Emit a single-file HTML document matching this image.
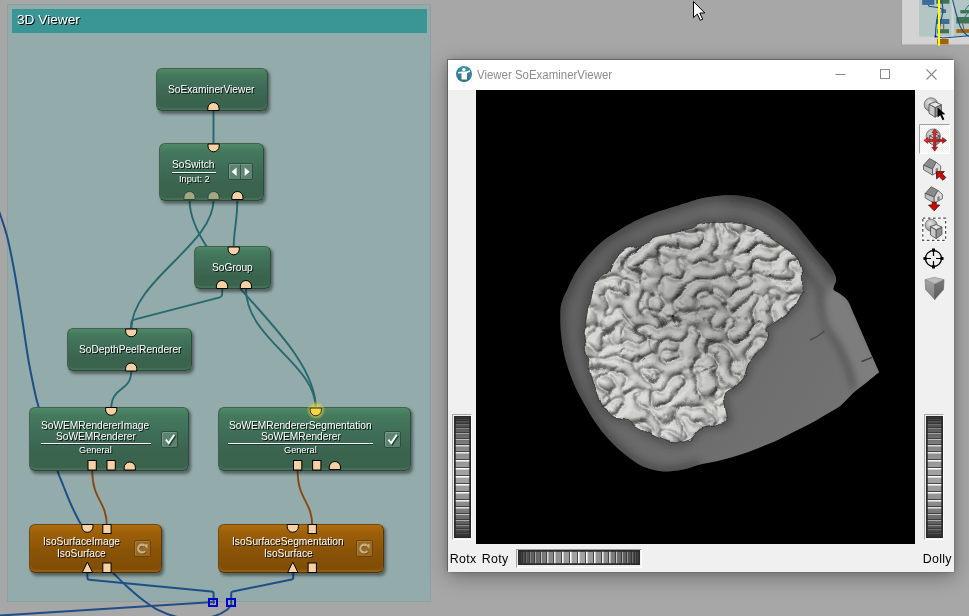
<!DOCTYPE html>
<html><head><meta charset="utf-8"><title>3D Viewer</title>
<style>

html,body{margin:0;padding:0;}
body{width:969px;height:616px;overflow:hidden;position:relative;background:#a7a7a7;font-family:"Liberation Sans",sans-serif;}
.abs{position:absolute;}
#frame{position:absolute;left:7px;top:4px;width:422px;height:596px;background:#93abaa;border:1px solid #8d9f9e;}
#hdr{position:absolute;left:12px;top:9px;width:415px;height:24px;background:#3a9595;color:#fff;font-size:13.7px;line-height:22px;text-shadow:1px 1px 0 #000;}
#hdr span{position:absolute;left:5px;top:0px;white-space:nowrap;will-change:transform;}
svg{position:absolute;left:0;top:0;overflow:visible;}
.node{position:absolute;box-sizing:border-box;border:1px solid;border-color:#455f4f #2f4b3b #2c4838 #455f4f;border-radius:6px;
 background:linear-gradient(#4f8a69 0%,#457a5d 12%,#40705a 35%,#3b644f 70%,#3a624d 100%);
 box-shadow:inset 0 -2px 1.5px rgba(110,175,135,.2),2px 2.5px 3px rgba(0,0,0,.42);color:#fff;font-size:10.2px;text-align:center;white-space:nowrap;
 text-shadow:1px 1px 0 rgba(10,25,18,.9);}
.node.or{border-color:#6b4a14 #55360a #4f3208 #6b4a14;box-shadow:inset 0 -2px 1.5px rgba(220,150,40,.28),2px 2.5px 3px rgba(0,0,0,.42);background:linear-gradient(#b06c0c 0%,#9c5f08 18%,#8a5407 55%,#7e4c06 100%);text-shadow:1px 1px 0 rgba(40,20,0,.9);}
#txt{position:absolute;left:0;top:0;width:0;height:0;z-index:3;color:#fff;font-size:10.2px;text-shadow:1px 1px 0 rgba(0,8,4,.92);}
.t{position:absolute;line-height:12px;height:12px;white-space:nowrap;will-change:transform;}
.s{font-size:9.2px;}
.ul{position:absolute;height:1px;background:#fff;box-shadow:0 1px 0 rgba(10,25,18,.6);}
.btn{position:absolute;box-sizing:border-box;border:1px solid #2f4c3d;border-radius:2px;background:#5b8571;box-shadow:inset 1px 1px 0 rgba(255,255,255,.18);}
.node.or .btn{border-color:#6a4509;background:#9b6a20;box-shadow:inset 1px 1px 0 rgba(255,255,255,.13);}

#win{position:absolute;left:448px;top:60px;width:506px;height:512px;background:#f0f0f0;z-index:5;
 box-shadow:-1px -1px 0 0 rgba(60,60,60,.5),1px 1px 0 0 rgba(60,60,60,.14),0 5px 20px rgba(0,0,0,.32),0 0 7px rgba(0,0,0,.2);}
#tb{position:absolute;left:0;top:0;width:506px;height:30px;background:#fff;}
#ttl{position:absolute;left:28.7px;top:6.5px;font-size:12.3px;line-height:16px;color:#8c8c8c;white-space:nowrap;transform:scaleX(.931);transform-origin:0 0;}
#vp{position:absolute;left:28px;top:30px;width:439px;height:454px;background:#000;overflow:hidden;}
.lbl{position:absolute;font-size:12.4px;line-height:14px;color:#000;white-space:nowrap;letter-spacing:.3px;}
.wheelv{position:absolute;box-sizing:border-box;width:20px;height:126px;border:1px solid;border-color:#a8a8a8 #fff #fff #a8a8a8;background:#f0f0f0;}
.wheelh{position:absolute;box-sizing:border-box;width:126px;height:19px;border:1px solid;border-color:#a0a0a0 #fff #fff #a0a0a0;background:#f0f0f0;}
</style></head>
<body>
<div id="frame"></div>
<div id="hdr"><span>3D Viewer</span></div>
<svg width="969" height="616" style="z-index:1"><path d="M213.5,110 L213.5,145" stroke="#27696e" stroke-width="1.9" fill="none" stroke-linecap="round"/>
<path d="M237.4,199.0 C237.4,223.2 233.7,228.1 233.7,248.0" stroke="#27696e" stroke-width="1.9" fill="none" stroke-linecap="round"/>
<path d="M189.5,199.5 C189.5,266.5 315.9,337.5 315.9,409.0" stroke="#27696e" stroke-width="1.9" fill="none" stroke-linecap="round"/>
<path d="M245.9,288.5 C245.9,339.5 315.9,363.2 315.9,409.0" stroke="#27696e" stroke-width="1.9" fill="none" stroke-linecap="round"/>
<path d="M213.6,199.5 C213.6,245.6 131.2,279.9 131.2,330.0" stroke="#27696e" stroke-width="1.9" fill="none" stroke-linecap="round"/>
<path d="M222.2,288 L222.2,293.5 C222.2,296.6 221,297.2 217,298.2 L137,318.9 C132.5,320.1 131.1,320.8 131.1,324.5 L131.1,330" stroke="#27696e" stroke-width="1.9" fill="none" stroke-linecap="round"/>
<path d="M131.3,370.5 C131.3,393.1 111.2,385.1 111.2,409.0" stroke="#27696e" stroke-width="1.9" fill="none" stroke-linecap="round"/>
<path d="M92.2,470.0 C92.2,500.5 106.8,500.6 106.8,526.0" stroke="#864914" stroke-width="1.9" fill="none" stroke-linecap="round"/>
<path d="M297.6,470.0 C297.6,500.5 312.2,500.6 312.2,526.0" stroke="#864914" stroke-width="1.9" fill="none" stroke-linecap="round"/>
<path d="M-6.0,196.0 C-5.0,199.0 -2.2,207.3 0.0,214.0 C2.2,220.7 4.6,226.5 7.0,236.0 C9.4,245.5 11.9,258.0 14.3,271.0 C16.7,284.0 19.0,299.0 21.4,314.0 C23.8,329.0 26.2,347.3 28.6,361.0 C31.0,374.7 34.0,388.3 35.7,396.0 C37.4,403.7 36.7,399.7 38.6,407.0 C40.5,414.3 43.9,429.4 47.0,440.0 C50.1,450.6 54.6,463.0 57.3,470.5 C60.0,478.0 60.7,479.3 63.0,485.0 C65.3,490.7 68.2,498.3 71.0,504.5 C73.8,510.7 77.3,517.8 79.6,522.0 C81.9,526.2 84.1,528.7 85.0,530.0" stroke="#1d4f86" stroke-width="2" fill="none" stroke-linecap="round"/>
<path d="M87.4,572 L87.4,578 Q87.4,579.6 89.4,579.8 L211.4,591.5 Q213.6,591.8 213.6,593.6 L213.6,603" stroke="#1d4f86" stroke-width="2" fill="none" stroke-linecap="round"/>
<path d="M293.2,572 L293.2,578 Q293.2,579.3 291.6,579.6 L232.8,591.4 Q231.2,591.8 231.2,593.6 L231.2,603" stroke="#1d4f86" stroke-width="2" fill="none" stroke-linecap="round"/>
<path d="M103.0,563.0 C103.8,563.8 105.8,566.3 107.5,568.0 C109.2,569.7 110.2,570.2 113.2,573.0 C116.2,575.8 120.5,580.5 125.4,585.0 C130.3,589.5 137.3,595.7 142.6,599.8 C147.9,603.9 151.6,606.7 157.3,609.6 C163.0,612.5 170.6,615.3 177.0,617.0 C183.4,618.7 189.7,620.2 196.0,620.0 C202.3,619.8 209.6,617.7 214.8,616.0 C220.0,614.3 224.2,611.7 227.0,609.7 C229.8,607.7 230.8,605.0 231.5,604.0" stroke="#1d4f86" stroke-width="2" fill="none" stroke-linecap="round"/>
<path d="M-2,615.6 L214,602.1" stroke="#1d4f86" stroke-width="2" fill="none" stroke-linecap="round"/></svg>
<div class="node " style="left:155.7px;top:68.0px;width:112.2px;height:42.8px;z-index:2"></div>
<div class="node " style="left:159.2px;top:143.2px;width:105.2px;height:57.4px;z-index:2"><div class="ul" style="left:11.8px;top:27.8px;width:44px"></div><div class="btn" style="left:68.3px;top:19.3px;width:24.5px;height:16.5px"></div></div>
<div class="node " style="left:193.6px;top:246.1px;width:77.8px;height:42.9px;z-index:2"></div>
<div class="node " style="left:66.7px;top:328.3px;width:125.2px;height:43.2px;z-index:2"></div>
<div class="node " style="left:29.1px;top:407.0px;width:160.0px;height:63.6px;z-index:2"><div class="ul" style="left:10.9px;top:35.0px;width:110px"></div><div class="btn" style="left:131.4px;top:22.5px;width:17px;height:17px"></div></div>
<div class="node " style="left:217.7px;top:407.0px;width:193.5px;height:63.6px;z-index:2"><div class="ul" style="left:9.0px;top:35.0px;width:145.5px"></div><div class="btn" style="left:165.3px;top:22.5px;width:17px;height:17px"></div></div>
<div class="node or" style="left:29.2px;top:523.8px;width:132.7px;height:49.2px;z-index:2"><div class="btn" style="left:104.1px;top:15.7px;width:16.5px;height:16.5px"></div></div>
<div class="node or" style="left:217.7px;top:523.8px;width:166.2px;height:49.2px;z-index:2"><div class="btn" style="left:137.8px;top:15.7px;width:16.5px;height:16.5px"></div></div>
<div id="txt"><span class="t" style="left:168px;top:84px">SoExaminerViewer</span><span class="t" style="left:172px;top:159px">SoSwitch</span><span class="t s" style="left:179px;top:173px">Input: 2</span><span class="t" style="left:212px;top:262px">SoGroup</span><span class="t" style="left:79px;top:344px">SoDepthPeelRenderer</span><span class="t" style="left:41px;top:420px">SoWEMRendererImage</span><span class="t" style="left:56px;top:431px">SoWEMRenderer</span><span class="t s" style="left:79px;top:444px">General</span><span class="t" style="left:229px;top:420px">SoWEMRendererSegmentation</span><span class="t" style="left:261px;top:431px">SoWEMRenderer</span><span class="t s" style="left:284px;top:444px">General</span><span class="t" style="left:43px;top:536px">IsoSurfaceImage</span><span class="t" style="left:57px;top:548px">IsoSurface</span><span class="t" style="left:232px;top:536px">IsoSurfaceSegmentation</span><span class="t" style="left:264px;top:548px">IsoSurface</span></div>
<svg width="969" height="616" style="z-index:3"><defs><radialGradient id="glow"><stop offset="0" stop-color="#f4e04a" stop-opacity=".95"/><stop offset=".62" stop-color="#dcd64e" stop-opacity=".62"/><stop offset="1" stop-color="#c8c850" stop-opacity="0"/></radialGradient></defs><path d="M207.8,110.5 L207.8,108.1 A5.6,5.6 0 0 1 219.0,108.1 L219.0,110.5 Z" fill="#f6d1a3" stroke="#000" stroke-width="1" opacity="1"/>
<path d="M208.0,144.0 L208.0,146.2 A5.6,5.6 0 0 0 219.2,146.2 L219.2,144.0 Z" fill="#f6d1a3" stroke="#000" stroke-width="1"/>
<path d="M183.9,199.5 L183.9,197.1 A5.6,5.6 0 0 1 195.1,197.1 L195.1,199.5 Z" fill="#a2a783" stroke="#2f4a3a" stroke-width="1" opacity="1"/>
<path d="M208.0,199.5 L208.0,197.1 A5.6,5.6 0 0 1 219.2,197.1 L219.2,199.5 Z" fill="#a2a783" stroke="#2f4a3a" stroke-width="1" opacity="1"/>
<path d="M231.8,199.5 L231.8,197.1 A5.6,5.6 0 0 1 243.0,197.1 L243.0,199.5 Z" fill="#f6d1a3" stroke="#000" stroke-width="1" opacity="1"/>
<path d="M228.1,247.0 L228.1,249.2 A5.6,5.6 0 0 0 239.3,249.2 L239.3,247.0 Z" fill="#f6d1a3" stroke="#000" stroke-width="1"/>
<path d="M216.4,288.5 L216.4,286.1 A5.6,5.6 0 0 1 227.6,286.1 L227.6,288.5 Z" fill="#f6d1a3" stroke="#000" stroke-width="1" opacity="1"/>
<path d="M240.3,288.5 L240.3,286.1 A5.6,5.6 0 0 1 251.5,286.1 L251.5,288.5 Z" fill="#f6d1a3" stroke="#000" stroke-width="1" opacity="1"/>
<path d="M125.6,329.0 L125.6,331.2 A5.6,5.6 0 0 0 136.8,331.2 L136.8,329.0 Z" fill="#f6d1a3" stroke="#000" stroke-width="1"/>
<path d="M125.6,371.0 L125.6,368.6 A5.6,5.6 0 0 1 136.8,368.6 L136.8,371.0 Z" fill="#f6d1a3" stroke="#000" stroke-width="1" opacity="1"/>
<path d="M105.6,407.5 L105.6,409.7 A5.6,5.6 0 0 0 116.8,409.7 L116.8,407.5 Z" fill="#f6d1a3" stroke="#000" stroke-width="1"/>
<rect x="88.0" y="460.5" width="8.3" height="9.5" fill="#f6d1a3" stroke="#000" stroke-width="1"/>
<rect x="107.0" y="460.5" width="8.3" height="9.5" fill="#f6d1a3" stroke="#000" stroke-width="1"/>
<path d="M124.2,470.0 L124.2,467.6 A5.6,5.6 0 0 1 135.4,467.6 L135.4,470.0 Z" fill="#f6d1a3" stroke="#000" stroke-width="1" opacity="1"/>
<rect x="293.5" y="460.5" width="8.3" height="9.5" fill="#f6d1a3" stroke="#000" stroke-width="1"/>
<rect x="312.6" y="460.5" width="8.3" height="9.5" fill="#f6d1a3" stroke="#000" stroke-width="1"/>
<path d="M329.3,469.5 L329.3,467.1 A5.6,5.6 0 0 1 340.5,467.1 L340.5,469.5 Z" fill="#f6d1a3" stroke="#000" stroke-width="1" opacity="1"/>
<circle cx="316" cy="410.3" r="9.6" fill="url(#glow)"/>
<path d="M310.2,408.0 L310.2,410.2 A5.6,5.6 0 0 0 321.4,410.2 L321.4,408.0 Z" fill="#f7d548" stroke="#3a3000" stroke-width="1"/>
<path d="M81.8,524.5 L81.8,526.7 A5.6,5.6 0 0 0 93.0,526.7 L93.0,524.5 Z" fill="#f6d1a3" stroke="#000" stroke-width="1"/>
<rect x="102.8" y="524.5" width="8.3" height="9.0" fill="#f6d1a3" stroke="#000" stroke-width="1"/>
<path d="M82.2,572.5 L87.4,562.0 L92.6,572.5 Z" fill="#f6d1a3" stroke="#000" stroke-width="1" stroke-linejoin="miter"/>
<rect x="102.8" y="563.0" width="8.3" height="9.5" fill="#f6d1a3" stroke="#000" stroke-width="1"/>
<path d="M287.2,524.5 L287.2,526.7 A5.6,5.6 0 0 0 298.4,526.7 L298.4,524.5 Z" fill="#f6d1a3" stroke="#000" stroke-width="1"/>
<rect x="308.1" y="524.5" width="8.3" height="9.0" fill="#f6d1a3" stroke="#000" stroke-width="1"/>
<path d="M287.6,572.5 L292.8,562.0 L298.0,572.5 Z" fill="#f6d1a3" stroke="#000" stroke-width="1" stroke-linejoin="miter"/>
<rect x="308.1" y="563.0" width="8.3" height="9.5" fill="#f6d1a3" stroke="#000" stroke-width="1"/>
<rect x="209" y="599" width="8" height="7" fill="none" stroke="#0000cc" stroke-width="2"/>
<rect x="227" y="599" width="8" height="7" fill="none" stroke="#0000cc" stroke-width="2"/>
<path d="M240.7,164.5 L240.7,179" stroke="#2f4c3d" stroke-width="1"/>
<path d="M241.7,164.8 L241.7,178.6" stroke="rgba(255,255,255,.18)" stroke-width="1"/>
<path d="M231.6,171.8 L236.6,167.6 L236.6,176 Z" fill="#fff"/>
<path d="M249.6,171.8 L244.6,167.6 L244.6,176 Z" fill="#fff"/>
<path d="M165.7,439.5 L168.7,443.3 L174.5,434.5" stroke="rgba(20,40,30,.7)" stroke-width="2.4" fill="none" transform="translate(1,1)"/>
<path d="M165.9,439.6 L168.7,443.1 L174.3,434.8" stroke="#fff" stroke-width="1.9" fill="none"/>
<path d="M388.2,439.5 L391.2,443.3 L397.0,434.5" stroke="rgba(20,40,30,.7)" stroke-width="2.4" fill="none" transform="translate(1,1)"/>
<path d="M388.4,439.6 L391.2,443.1 L396.8,434.8" stroke="#fff" stroke-width="1.9" fill="none"/>
<path d="M145.1,551.1 A3.9,3.9 0 1 1 144.6,545.6" stroke="#3a2404" stroke-width="2" fill="none" opacity=".5" transform="translate(.6,.7)"/>
<path d="M145.1,551.1 A3.9,3.9 0 1 1 144.6,545.6" stroke="#c6b28e" stroke-width="2.2" fill="none"/>
<path d="M143.7,545.2 L147.5,543.8 L147.3,548.8 Z" fill="#c6b28e"/>
<path d="M367.3,551.1 A3.9,3.9 0 1 1 366.8,545.6" stroke="#3a2404" stroke-width="2" fill="none" opacity=".5" transform="translate(.6,.7)"/>
<path d="M367.3,551.1 A3.9,3.9 0 1 1 366.8,545.6" stroke="#c6b28e" stroke-width="2.2" fill="none"/>
<path d="M365.9,545.2 L369.7,543.8 L369.5,548.8 Z" fill="#c6b28e"/></svg>
<div id="win"><div id="tb"></div>
<svg width="18" height="18" style="left:7px;top:5px" viewBox="0 0 18 18"><defs><linearGradient id="ig" x1="0" y1="0" x2="0" y2="1"><stop offset="0" stop-color="#3f93ad"/><stop offset="1" stop-color="#2b6f8d"/></linearGradient></defs><circle cx="9" cy="9" r="8" fill="url(#ig)"/><circle cx="8.9" cy="4.6" r="1.7" fill="#fff"/><path d="M3,7.2 L6.5,6.6 L11.3,6.6 L14.9,5.2 L15.2,6.5 L12,8.2 L12,14.6 L6.5,14.6 L6.5,8.2 L3.1,8.4 Z" fill="#fff"/></svg>
<div id="ttl">Viewer SoExaminerViewer</div>
<svg width="506" height="30" style="left:0;top:0"><path d="M387.5,14.5 L397.5,14.5" stroke="#8a8a8a" stroke-width="1"/><rect x="432.5" y="9.5" width="9" height="9" fill="none" stroke="#8a8a8a" stroke-width="1"/><path d="M478.5,9.5 L488.5,19.5 M488.5,9.5 L478.5,19.5" stroke="#8a8a8a" stroke-width="1.1"/></svg>
<div id="vp"><svg width="439" height="454" viewBox="0 0 439 454">
<defs>
<linearGradient id="hg" x1="90" y1="150" x2="390" y2="330" gradientUnits="userSpaceOnUse">
 <stop offset="0" stop-color="#5e5e5e"/><stop offset=".35" stop-color="#686868"/><stop offset="1" stop-color="#747474"/>
</linearGradient>
<linearGradient id="bsh" x1="120" y1="330" x2="300" y2="170" gradientUnits="userSpaceOnUse">
 <stop offset="0" stop-color="#fff" stop-opacity=".1"/><stop offset=".45" stop-color="#fff" stop-opacity=".02"/><stop offset=".6" stop-color="#000" stop-opacity=".05"/><stop offset="1" stop-color="#000" stop-opacity=".02"/>
</linearGradient>
<radialGradient id="bcd" cx="218" cy="222" r="85" gradientUnits="userSpaceOnUse"><stop offset="0" stop-color="#000" stop-opacity=".16"/><stop offset=".6" stop-color="#000" stop-opacity=".08"/><stop offset="1" stop-color="#000" stop-opacity="0"/></radialGradient>
<clipPath id="hc"><path d="M403.2,282.3 C401.0,284.0 394.5,289.2 390.2,292.7 C385.9,296.2 381.5,299.2 377.2,303.1 C372.9,307.0 369.0,312.3 364.3,316.0 C359.5,319.7 353.9,322.1 348.7,325.2 C343.5,328.2 338.3,331.5 333.1,334.3 C327.9,337.1 322.7,339.4 317.5,342.0 C312.3,344.6 307.1,347.5 301.9,349.9 C296.7,352.3 292.3,354.0 286.3,356.4 C280.2,358.8 272.5,361.9 265.6,364.2 C258.7,366.5 251.7,368.6 244.8,370.3 C237.9,372.0 230.2,373.0 224.0,374.5 C217.8,376.0 213.4,378.4 207.4,379.5 C201.4,380.6 194.5,381.8 188.1,381.4 C181.7,381.0 174.3,379.3 168.8,377.2 C163.3,375.1 160.0,372.7 155.0,369.0 C150.0,365.3 144.0,360.7 138.5,355.2 C133.0,349.7 127.0,342.8 121.9,335.9 C116.8,329.0 112.2,321.2 108.1,313.8 C104.0,306.4 100.3,299.5 97.1,291.7 C93.9,283.9 90.8,275.2 88.8,266.9 C86.8,258.6 85.6,249.8 84.9,242.0 C84.2,234.2 84.2,225.3 84.5,220.0 C84.8,214.7 85.5,213.4 86.6,210.0 C87.7,206.6 89.0,204.3 91.3,199.5 C93.6,194.7 96.9,186.9 100.4,181.3 C103.8,175.7 107.7,170.7 112.0,165.7 C116.3,160.7 121.3,155.5 126.3,151.4 C131.3,147.3 136.3,144.5 141.9,141.0 C147.5,137.5 154.0,133.6 160.1,130.6 C166.2,127.6 171.8,125.3 178.3,122.9 C184.8,120.5 192.1,118.6 199.0,116.4 C205.9,114.2 214.6,111.4 219.8,109.9 C225.0,108.4 226.5,108.2 230.0,107.6 C233.5,106.9 236.9,106.4 240.6,106.0 C244.3,105.6 247.8,105.2 252.0,105.2 C256.2,105.2 260.3,105.2 265.6,106.0 C270.9,106.8 277.7,107.7 283.7,109.9 C289.8,112.1 296.3,115.3 301.9,119.0 C307.5,122.7 312.7,127.2 317.5,132.0 C322.3,136.8 326.6,142.8 330.5,147.5 C334.4,152.2 337.4,156.4 340.9,160.5 C344.4,164.6 348.5,168.7 351.3,172.2 C354.1,175.7 356.0,178.5 357.5,181.5 C359.0,184.5 360.2,187.1 360.2,190.0 C360.2,192.9 356.8,196.9 357.4,199.2 C357.9,201.4 361.1,201.6 363.5,203.5 C365.9,205.4 369.2,207.3 371.5,210.5 C373.8,213.7 375.0,217.8 377.2,222.9 C379.5,227.9 382.4,234.8 385.0,240.8 C387.6,246.8 389.8,252.1 392.8,259.0 C395.8,265.9 401.5,278.4 403.2,282.3Z"/></clipPath>
<clipPath id="bc"><path d="M224.0,133.2 C229.0,132.1 233.5,133.4 239.6,133.2 C245.7,133.0 254.3,131.3 260.4,132.0 C266.4,132.7 270.7,134.9 275.9,137.1 C281.1,139.2 286.3,141.9 291.5,144.9 C296.7,147.9 302.3,151.8 307.1,155.3 C311.9,158.8 317.1,161.8 320.1,165.7 C323.1,169.6 324.2,173.9 325.3,178.7 C326.4,183.5 326.8,189.5 326.6,194.3 C326.4,199.1 325.9,203.0 324.0,207.3 C322.1,211.6 318.6,216.2 314.9,220.0 C311.2,223.8 306.0,227.4 301.9,230.4 C297.8,233.4 291.9,235.6 290.2,238.2 C288.5,240.8 292.2,242.5 291.5,246.0 C290.8,249.5 289.3,254.7 286.3,259.0 C283.3,263.3 276.4,267.2 273.4,272.0 C270.4,276.8 270.8,283.2 268.2,287.5 C265.6,291.8 261.0,295.3 257.8,297.9 C254.5,300.5 250.2,300.5 248.7,303.1 C247.2,305.8 248.3,309.0 248.8,313.8 C249.3,318.6 253.0,328.2 251.6,331.7 C250.2,335.1 245.2,333.4 240.6,334.5 C236.0,335.6 228.6,336.1 224.0,338.6 C219.4,341.1 218.0,347.4 213.0,349.7 C208.0,352.0 200.2,353.3 193.7,352.4 C187.3,351.5 179.8,346.9 174.3,344.1 C168.8,341.4 164.3,338.2 160.6,335.9 C156.9,333.6 156.4,332.1 152.3,330.3 C148.1,328.5 140.5,328.0 135.7,324.8 C130.9,321.6 126.5,317.0 123.3,311.0 C120.1,305.0 118.5,296.4 116.4,289.0 C114.3,281.6 112.3,274.3 110.9,266.9 C109.5,259.5 108.2,251.3 108.1,244.8 C108.0,238.3 109.9,232.5 110.5,228.0 C111.1,223.5 111.1,222.0 112.0,217.7 C112.9,213.4 114.2,206.8 115.9,202.0 C117.6,197.2 119.6,192.4 122.4,189.0 C125.2,185.6 130.0,184.8 132.8,181.3 C135.6,177.9 136.0,172.2 139.3,168.3 C142.5,164.4 147.5,160.1 152.3,157.9 C157.1,155.7 163.6,157.0 167.9,155.3 C172.2,153.6 174.0,149.4 178.3,147.5 C182.6,145.6 188.7,144.9 193.9,143.6 C199.1,142.3 204.5,141.4 209.5,139.7 C214.5,138.0 219.0,134.3 224.0,133.2Z"/></clipPath>
<filter id="dsp" x="-5%" y="-5%" width="110%" height="110%"><feTurbulence type="fractalNoise" baseFrequency="0.09" numOctaves="1" seed="3" result="n"/><feDisplacementMap in="SourceGraphic" in2="n" scale="7" xChannelSelector="R" yChannelSelector="G"/></filter>
<filter id="bl8" x="-20%" y="-20%" width="140%" height="140%"><feGaussianBlur stdDeviation="8"/></filter>
<filter id="bl4" x="-10%" y="-10%" width="120%" height="120%"><feGaussianBlur stdDeviation="4.5"/></filter>
<filter id="bl6" x="-10%" y="-10%" width="120%" height="120%"><feGaussianBlur stdDeviation="6"/></filter>
<filter id="bl3" x="-20%" y="-20%" width="140%" height="140%"><feGaussianBlur stdDeviation="3"/></filter>
<filter id="bf" x="0" y="0" width="100%" height="100%" color-interpolation-filters="sRGB">
 <feTurbulence type="turbulence" baseFrequency="0.054 0.063" numOctaves="1" seed="11" result="t"/>
 <feColorMatrix in="t" type="matrix" values="0 0 0 0 0  0 0 0 0 0  0 0 0 0 0  2.4 0 0 0 0" result="a"/>
 <feComponentTransfer in="a" result="g"><feFuncA type="gamma" amplitude="1" exponent="0.5" offset="0"/></feComponentTransfer>
 <feGaussianBlur in="g" stdDeviation="1.25" result="ab"/>
 <feDiffuseLighting in="ab" surfaceScale="3.4" diffuseConstant="1.0" lighting-color="#dcdcd8" result="l"><feDistantLight azimuth="225" elevation="66"/></feDiffuseLighting>
 <feComponentTransfer in="ab" result="gr"><feFuncA type="table" tableValues="0.65 0.5 0.22 0.05 0 0 0 0 0 0 0 0 0 0 0 0"/></feComponentTransfer>
 <feGaussianBlur in="gr" stdDeviation="0.4" result="grb"/>
 <feComposite in="grb" in2="l" operator="over"/>
</filter>
</defs>
<path d="M403.2,282.3 C401.0,284.0 394.5,289.2 390.2,292.7 C385.9,296.2 381.5,299.2 377.2,303.1 C372.9,307.0 369.0,312.3 364.3,316.0 C359.5,319.7 353.9,322.1 348.7,325.2 C343.5,328.2 338.3,331.5 333.1,334.3 C327.9,337.1 322.7,339.4 317.5,342.0 C312.3,344.6 307.1,347.5 301.9,349.9 C296.7,352.3 292.3,354.0 286.3,356.4 C280.2,358.8 272.5,361.9 265.6,364.2 C258.7,366.5 251.7,368.6 244.8,370.3 C237.9,372.0 230.2,373.0 224.0,374.5 C217.8,376.0 213.4,378.4 207.4,379.5 C201.4,380.6 194.5,381.8 188.1,381.4 C181.7,381.0 174.3,379.3 168.8,377.2 C163.3,375.1 160.0,372.7 155.0,369.0 C150.0,365.3 144.0,360.7 138.5,355.2 C133.0,349.7 127.0,342.8 121.9,335.9 C116.8,329.0 112.2,321.2 108.1,313.8 C104.0,306.4 100.3,299.5 97.1,291.7 C93.9,283.9 90.8,275.2 88.8,266.9 C86.8,258.6 85.6,249.8 84.9,242.0 C84.2,234.2 84.2,225.3 84.5,220.0 C84.8,214.7 85.5,213.4 86.6,210.0 C87.7,206.6 89.0,204.3 91.3,199.5 C93.6,194.7 96.9,186.9 100.4,181.3 C103.8,175.7 107.7,170.7 112.0,165.7 C116.3,160.7 121.3,155.5 126.3,151.4 C131.3,147.3 136.3,144.5 141.9,141.0 C147.5,137.5 154.0,133.6 160.1,130.6 C166.2,127.6 171.8,125.3 178.3,122.9 C184.8,120.5 192.1,118.6 199.0,116.4 C205.9,114.2 214.6,111.4 219.8,109.9 C225.0,108.4 226.5,108.2 230.0,107.6 C233.5,106.9 236.9,106.4 240.6,106.0 C244.3,105.6 247.8,105.2 252.0,105.2 C256.2,105.2 260.3,105.2 265.6,106.0 C270.9,106.8 277.7,107.7 283.7,109.9 C289.8,112.1 296.3,115.3 301.9,119.0 C307.5,122.7 312.7,127.2 317.5,132.0 C322.3,136.8 326.6,142.8 330.5,147.5 C334.4,152.2 337.4,156.4 340.9,160.5 C344.4,164.6 348.5,168.7 351.3,172.2 C354.1,175.7 356.0,178.5 357.5,181.5 C359.0,184.5 360.2,187.1 360.2,190.0 C360.2,192.9 356.8,196.9 357.4,199.2 C357.9,201.4 361.1,201.6 363.5,203.5 C365.9,205.4 369.2,207.3 371.5,210.5 C373.8,213.7 375.0,217.8 377.2,222.9 C379.5,227.9 382.4,234.8 385.0,240.8 C387.6,246.8 389.8,252.1 392.8,259.0 C395.8,265.9 401.5,278.4 403.2,282.3Z" fill="url(#hg)"/>
<g clip-path="url(#hc)">
 <path d="M224.0,374.5 C221.2,375.3 213.4,378.4 207.4,379.5 C201.4,380.6 194.5,381.8 188.1,381.4 C181.7,381.0 174.3,379.3 168.8,377.2 C163.3,375.1 160.0,372.7 155.0,369.0 C150.0,365.3 144.0,360.7 138.5,355.2 C133.0,349.7 127.0,342.8 121.9,335.9 C116.8,329.0 112.2,321.2 108.1,313.8 C104.0,306.4 100.3,299.5 97.1,291.7 C93.9,283.9 90.8,275.2 88.8,266.9 C86.8,258.6 85.6,249.8 84.9,242.0 C84.2,234.2 84.2,225.3 84.5,220.0 C84.8,214.7 85.5,213.4 86.6,210.0 C87.7,206.6 89.0,204.3 91.3,199.5 C93.6,194.7 96.9,186.9 100.4,181.3 C103.8,175.7 107.7,170.7 112.0,165.7 C116.3,160.7 121.3,155.5 126.3,151.4 C131.3,147.3 136.3,144.5 141.9,141.0 C147.5,137.5 154.0,133.6 160.1,130.6 C166.2,127.6 171.8,125.3 178.3,122.9 C184.8,120.5 192.1,118.6 199.0,116.4 C205.9,114.2 212.9,111.6 219.8,109.9 C226.7,108.2 233.0,106.7 240.6,106.0 C248.2,105.3 258.4,105.3 265.6,106.0 C272.8,106.7 277.7,107.7 283.7,109.9 C289.8,112.1 296.3,115.3 301.9,119.0 C307.5,122.7 312.7,127.2 317.5,132.0 C322.3,136.8 326.6,142.8 330.5,147.5 C334.4,152.2 337.4,156.4 340.9,160.5 C344.4,164.6 348.3,168.3 351.3,172.2 C354.3,176.1 357.7,181.9 359.0,183.9" fill="none" stroke="#1c1c1c" stroke-width="9" opacity=".44" filter="url(#bl4)"/>
 <path d="M252.0,102.0 C254.8,102.2 263.3,102.2 269.0,103.0 C274.7,103.8 280.0,104.8 286.0,107.0 C292.0,109.2 299.2,112.3 305.0,116.0 C310.8,119.7 316.2,124.2 321.0,129.0 C325.8,133.8 330.0,140.2 334.0,145.0 C338.0,149.8 341.5,153.8 345.0,158.0 C348.5,162.2 352.0,166.0 355.0,170.0 C358.0,174.0 361.2,178.0 363.0,182.0 C364.8,186.0 365.5,192.0 366.0,194.0" fill="none" stroke="#1e1e1e" stroke-width="26" opacity=".34" filter="url(#bl8)"/>
 <path d="M347.0,215.0 C347.4,209.5 350.2,207.2 352.0,204.0 C353.8,200.8 354.7,194.8 358.0,196.0 C361.3,197.2 367.5,203.5 372.0,211.0 C376.5,218.5 379.7,229.1 385.0,241.0 C390.3,252.9 402.8,274.0 403.6,282.7 C404.4,291.4 393.9,290.4 390.0,293.0 C386.1,295.6 382.6,300.9 380.0,298.0 C377.4,295.1 377.4,283.2 374.7,275.8 C372.0,268.4 367.8,260.1 363.6,253.7 C359.4,247.3 352.6,243.6 349.8,237.2 C347.0,230.8 346.6,220.5 347.0,215.0Z" fill="#828282" opacity=".75" filter="url(#bl3)"/>
 <path d="M322,176 Q336,186 343,200 Q346,222 350,237 Q362,252 371,274 Q376,288 378,298" fill="none" stroke="#343434" stroke-width="7" opacity=".36" filter="url(#bl3)"/>
 <path d="M334,250 Q342,247 348.500,241" fill="none" stroke="#454545" stroke-width="1.6" opacity=".8"/>
 <path d="M385.500,271.500 L396,267.500" fill="none" stroke="#3f3f3f" stroke-width="1.4"/>
 <path d="M224.0,133.2 C229.0,132.1 233.5,133.4 239.6,133.2 C245.7,133.0 254.3,131.3 260.4,132.0 C266.4,132.7 270.7,134.9 275.9,137.1 C281.1,139.2 286.3,141.9 291.5,144.9 C296.7,147.9 302.3,151.8 307.1,155.3 C311.9,158.8 317.1,161.8 320.1,165.7 C323.1,169.6 324.2,173.9 325.3,178.7 C326.4,183.5 326.8,189.5 326.6,194.3 C326.4,199.1 325.9,203.0 324.0,207.3 C322.1,211.6 318.6,216.2 314.9,220.0 C311.2,223.8 306.0,227.4 301.9,230.4 C297.8,233.4 291.9,235.6 290.2,238.2 C288.5,240.8 292.2,242.5 291.5,246.0 C290.8,249.5 289.3,254.7 286.3,259.0 C283.3,263.3 276.4,267.2 273.4,272.0 C270.4,276.8 270.8,283.2 268.2,287.5 C265.6,291.8 261.0,295.3 257.8,297.9 C254.5,300.5 250.2,300.5 248.7,303.1 C247.2,305.8 248.3,309.0 248.8,313.8 C249.3,318.6 253.0,328.2 251.6,331.7 C250.2,335.1 245.2,333.4 240.6,334.5 C236.0,335.6 228.6,336.1 224.0,338.6 C219.4,341.1 218.0,347.4 213.0,349.7 C208.0,352.0 200.2,353.3 193.7,352.4 C187.3,351.5 179.8,346.9 174.3,344.1 C168.8,341.4 164.3,338.2 160.6,335.9 C156.9,333.6 156.4,332.1 152.3,330.3 C148.1,328.5 140.5,328.0 135.7,324.8 C130.9,321.6 126.5,317.0 123.3,311.0 C120.1,305.0 118.5,296.4 116.4,289.0 C114.3,281.6 112.3,274.3 110.9,266.9 C109.5,259.5 108.2,251.3 108.1,244.8 C108.0,238.3 109.9,232.5 110.5,228.0 C111.1,223.5 111.1,222.0 112.0,217.7 C112.9,213.4 114.2,206.8 115.9,202.0 C117.6,197.2 119.6,192.4 122.4,189.0 C125.2,185.6 130.0,184.8 132.8,181.3 C135.6,177.9 136.0,172.2 139.3,168.3 C142.5,164.4 147.5,160.1 152.3,157.9 C157.1,155.7 163.6,157.0 167.9,155.3 C172.2,153.6 174.0,149.4 178.3,147.5 C182.6,145.6 188.7,144.9 193.9,143.6 C199.1,142.3 204.5,141.4 209.5,139.7 C214.5,138.0 219.0,134.3 224.0,133.2Z" fill="none" stroke="#2a2a2a" stroke-width="9" opacity=".35" filter="url(#bl3)"/>
</g>
<g filter="url(#dsp)"><g clip-path="url(#bc)"><rect x="100" y="125" width="240" height="235" filter="url(#bf)"/><rect x="100" y="125" width="240" height="235" fill="url(#bsh)"/><rect x="100" y="125" width="240" height="235" fill="url(#bcd)"/></g>
<path d="M224.0,133.2 C229.0,132.1 233.5,133.4 239.6,133.2 C245.7,133.0 254.3,131.3 260.4,132.0 C266.4,132.7 270.7,134.9 275.9,137.1 C281.1,139.2 286.3,141.9 291.5,144.9 C296.7,147.9 302.3,151.8 307.1,155.3 C311.9,158.8 317.1,161.8 320.1,165.7 C323.1,169.6 324.2,173.9 325.3,178.7 C326.4,183.5 326.8,189.5 326.6,194.3 C326.4,199.1 325.9,203.0 324.0,207.3 C322.1,211.6 318.6,216.2 314.9,220.0 C311.2,223.8 306.0,227.4 301.9,230.4 C297.8,233.4 291.9,235.6 290.2,238.2 C288.5,240.8 292.2,242.5 291.5,246.0 C290.8,249.5 289.3,254.7 286.3,259.0 C283.3,263.3 276.4,267.2 273.4,272.0 C270.4,276.8 270.8,283.2 268.2,287.5 C265.6,291.8 261.0,295.3 257.8,297.9 C254.5,300.5 250.2,300.5 248.7,303.1 C247.2,305.8 248.3,309.0 248.8,313.8 C249.3,318.6 253.0,328.2 251.6,331.7 C250.2,335.1 245.2,333.4 240.6,334.5 C236.0,335.6 228.6,336.1 224.0,338.6 C219.4,341.1 218.0,347.4 213.0,349.7 C208.0,352.0 200.2,353.3 193.7,352.4 C187.3,351.5 179.8,346.9 174.3,344.1 C168.8,341.4 164.3,338.2 160.6,335.9 C156.9,333.6 156.4,332.1 152.3,330.3 C148.1,328.5 140.5,328.0 135.7,324.8 C130.9,321.6 126.5,317.0 123.3,311.0 C120.1,305.0 118.5,296.4 116.4,289.0 C114.3,281.6 112.3,274.3 110.9,266.9 C109.5,259.5 108.2,251.3 108.1,244.8 C108.0,238.3 109.9,232.5 110.5,228.0 C111.1,223.5 111.1,222.0 112.0,217.7 C112.9,213.4 114.2,206.8 115.9,202.0 C117.6,197.2 119.6,192.4 122.4,189.0 C125.2,185.6 130.0,184.8 132.8,181.3 C135.6,177.9 136.0,172.2 139.3,168.3 C142.5,164.4 147.5,160.1 152.3,157.9 C157.1,155.7 163.6,157.0 167.9,155.3 C172.2,153.6 174.0,149.4 178.3,147.5 C182.6,145.6 188.7,144.9 193.9,143.6 C199.1,142.3 204.5,141.4 209.5,139.7 C214.5,138.0 219.0,134.3 224.0,133.2Z" fill="none" stroke="#2c2c2c" stroke-width="1.1" opacity=".75"/></g>
</svg></div>
<div class="wheelv" style="left:4px;top:354px"></div><svg width="17" height="122" style="left:5.8px;top:356.0px"><defs><linearGradient id="wgl" x1="0" y1="0" x2="0" y2="1"><stop offset="0" stop-color="#383838"/><stop offset=".1" stop-color="#5c5c5c"/><stop offset=".28" stop-color="#8c8c8c"/><stop offset=".5" stop-color="#a6a6a6"/><stop offset=".72" stop-color="#8c8c8c"/><stop offset=".9" stop-color="#5c5c5c"/><stop offset="1" stop-color="#383838"/></linearGradient></defs><rect x="0" y="0" width="17" height="122" fill="#2b2b2b"/><rect x="1.8" y="1.5" width="13.4" height="119.0" fill="url(#wgl)"/><rect x="1.8" y="2" width="13.4" height="1" fill="#1e1e1e" opacity="0.33"/><rect x="1.8" y="3" width="13.4" height="1" fill="#fff" opacity="0.02"/><rect x="1.8" y="4" width="13.4" height="1" fill="#1e1e1e" opacity="0.39"/><rect x="1.8" y="5" width="13.4" height="1" fill="#fff" opacity="0.08"/><rect x="1.8" y="7" width="13.4" height="1" fill="#1e1e1e" opacity="0.45"/><rect x="1.8" y="8" width="13.4" height="1" fill="#fff" opacity="0.17"/><rect x="1.8" y="11" width="13.4" height="1" fill="#1e1e1e" opacity="0.50"/><rect x="1.8" y="12" width="13.4" height="1" fill="#fff" opacity="0.28"/><rect x="1.8" y="16" width="13.4" height="1" fill="#1e1e1e" opacity="0.55"/><rect x="1.8" y="17" width="13.4" height="1" fill="#fff" opacity="0.41"/><rect x="1.8" y="22" width="13.4" height="1" fill="#1e1e1e" opacity="0.59"/><rect x="1.8" y="23" width="13.4" height="1" fill="#fff" opacity="0.55"/><rect x="1.8" y="28" width="13.4" height="1" fill="#1e1e1e" opacity="0.63"/><rect x="1.8" y="29" width="13.4" height="1" fill="#fff" opacity="0.69"/><rect x="1.8" y="30" width="13.4" height="1" fill="#fff" opacity="0.38"/><rect x="1.8" y="35" width="13.4" height="1" fill="#1e1e1e" opacity="0.66"/><rect x="1.8" y="36" width="13.4" height="1" fill="#fff" opacity="0.81"/><rect x="1.8" y="37" width="13.4" height="1" fill="#fff" opacity="0.45"/><rect x="1.8" y="43" width="13.4" height="1" fill="#1e1e1e" opacity="0.68"/><rect x="1.8" y="44" width="13.4" height="1" fill="#fff" opacity="0.91"/><rect x="1.8" y="45" width="13.4" height="1" fill="#fff" opacity="0.50"/><rect x="1.8" y="51" width="13.4" height="1" fill="#1e1e1e" opacity="0.69"/><rect x="1.8" y="52" width="13.4" height="1" fill="#fff" opacity="0.97"/><rect x="1.8" y="53" width="13.4" height="1" fill="#fff" opacity="0.54"/><rect x="1.8" y="59" width="13.4" height="1" fill="#1e1e1e" opacity="0.70"/><rect x="1.8" y="60" width="13.4" height="1" fill="#fff" opacity="1.00"/><rect x="1.8" y="61" width="13.4" height="1" fill="#fff" opacity="0.55"/><rect x="1.8" y="67" width="13.4" height="1" fill="#1e1e1e" opacity="0.70"/><rect x="1.8" y="68" width="13.4" height="1" fill="#fff" opacity="0.99"/><rect x="1.8" y="69" width="13.4" height="1" fill="#fff" opacity="0.54"/><rect x="1.8" y="75" width="13.4" height="1" fill="#1e1e1e" opacity="0.69"/><rect x="1.8" y="76" width="13.4" height="1" fill="#fff" opacity="0.93"/><rect x="1.8" y="77" width="13.4" height="1" fill="#fff" opacity="0.51"/><rect x="1.8" y="83" width="13.4" height="1" fill="#1e1e1e" opacity="0.67"/><rect x="1.8" y="84" width="13.4" height="1" fill="#fff" opacity="0.84"/><rect x="1.8" y="85" width="13.4" height="1" fill="#fff" opacity="0.46"/><rect x="1.8" y="90" width="13.4" height="1" fill="#1e1e1e" opacity="0.64"/><rect x="1.8" y="91" width="13.4" height="1" fill="#fff" opacity="0.73"/><rect x="1.8" y="92" width="13.4" height="1" fill="#fff" opacity="0.40"/><rect x="1.8" y="97" width="13.4" height="1" fill="#1e1e1e" opacity="0.60"/><rect x="1.8" y="98" width="13.4" height="1" fill="#fff" opacity="0.59"/><rect x="1.8" y="103" width="13.4" height="1" fill="#1e1e1e" opacity="0.56"/><rect x="1.8" y="104" width="13.4" height="1" fill="#fff" opacity="0.45"/><rect x="1.8" y="108" width="13.4" height="1" fill="#1e1e1e" opacity="0.52"/><rect x="1.8" y="109" width="13.4" height="1" fill="#fff" opacity="0.32"/><rect x="1.8" y="112" width="13.4" height="1" fill="#1e1e1e" opacity="0.47"/><rect x="1.8" y="113" width="13.4" height="1" fill="#fff" opacity="0.20"/><rect x="1.8" y="116" width="13.4" height="1" fill="#1e1e1e" opacity="0.41"/><rect x="1.8" y="117" width="13.4" height="1" fill="#fff" opacity="0.10"/><rect x="1.8" y="118" width="13.4" height="1" fill="#1e1e1e" opacity="0.35"/><rect x="1.8" y="119" width="13.4" height="1" fill="#fff" opacity="0.04"/><rect x="1.8" y="119" width="13.4" height="1" fill="#1e1e1e" opacity="0.29"/><rect x="1.8" y="120" width="13.4" height="1" fill="#fff" opacity="0.00"/></svg>
<div class="wheelv" style="left:476px;top:354px"></div><svg width="17" height="122" style="left:477.8px;top:356.0px"><defs><linearGradient id="wgr" x1="0" y1="0" x2="0" y2="1"><stop offset="0" stop-color="#383838"/><stop offset=".1" stop-color="#5c5c5c"/><stop offset=".28" stop-color="#8c8c8c"/><stop offset=".5" stop-color="#a6a6a6"/><stop offset=".72" stop-color="#8c8c8c"/><stop offset=".9" stop-color="#5c5c5c"/><stop offset="1" stop-color="#383838"/></linearGradient></defs><rect x="0" y="0" width="17" height="122" fill="#2b2b2b"/><rect x="1.8" y="1.5" width="13.4" height="119.0" fill="url(#wgr)"/><rect x="1.8" y="2" width="13.4" height="1" fill="#1e1e1e" opacity="0.33"/><rect x="1.8" y="3" width="13.4" height="1" fill="#fff" opacity="0.02"/><rect x="1.8" y="4" width="13.4" height="1" fill="#1e1e1e" opacity="0.39"/><rect x="1.8" y="5" width="13.4" height="1" fill="#fff" opacity="0.08"/><rect x="1.8" y="7" width="13.4" height="1" fill="#1e1e1e" opacity="0.45"/><rect x="1.8" y="8" width="13.4" height="1" fill="#fff" opacity="0.17"/><rect x="1.8" y="11" width="13.4" height="1" fill="#1e1e1e" opacity="0.50"/><rect x="1.8" y="12" width="13.4" height="1" fill="#fff" opacity="0.28"/><rect x="1.8" y="16" width="13.4" height="1" fill="#1e1e1e" opacity="0.55"/><rect x="1.8" y="17" width="13.4" height="1" fill="#fff" opacity="0.41"/><rect x="1.8" y="22" width="13.4" height="1" fill="#1e1e1e" opacity="0.59"/><rect x="1.8" y="23" width="13.4" height="1" fill="#fff" opacity="0.55"/><rect x="1.8" y="28" width="13.4" height="1" fill="#1e1e1e" opacity="0.63"/><rect x="1.8" y="29" width="13.4" height="1" fill="#fff" opacity="0.69"/><rect x="1.8" y="30" width="13.4" height="1" fill="#fff" opacity="0.38"/><rect x="1.8" y="35" width="13.4" height="1" fill="#1e1e1e" opacity="0.66"/><rect x="1.8" y="36" width="13.4" height="1" fill="#fff" opacity="0.81"/><rect x="1.8" y="37" width="13.4" height="1" fill="#fff" opacity="0.45"/><rect x="1.8" y="43" width="13.4" height="1" fill="#1e1e1e" opacity="0.68"/><rect x="1.8" y="44" width="13.4" height="1" fill="#fff" opacity="0.91"/><rect x="1.8" y="45" width="13.4" height="1" fill="#fff" opacity="0.50"/><rect x="1.8" y="51" width="13.4" height="1" fill="#1e1e1e" opacity="0.69"/><rect x="1.8" y="52" width="13.4" height="1" fill="#fff" opacity="0.97"/><rect x="1.8" y="53" width="13.4" height="1" fill="#fff" opacity="0.54"/><rect x="1.8" y="59" width="13.4" height="1" fill="#1e1e1e" opacity="0.70"/><rect x="1.8" y="60" width="13.4" height="1" fill="#fff" opacity="1.00"/><rect x="1.8" y="61" width="13.4" height="1" fill="#fff" opacity="0.55"/><rect x="1.8" y="67" width="13.4" height="1" fill="#1e1e1e" opacity="0.70"/><rect x="1.8" y="68" width="13.4" height="1" fill="#fff" opacity="0.99"/><rect x="1.8" y="69" width="13.4" height="1" fill="#fff" opacity="0.54"/><rect x="1.8" y="75" width="13.4" height="1" fill="#1e1e1e" opacity="0.69"/><rect x="1.8" y="76" width="13.4" height="1" fill="#fff" opacity="0.93"/><rect x="1.8" y="77" width="13.4" height="1" fill="#fff" opacity="0.51"/><rect x="1.8" y="83" width="13.4" height="1" fill="#1e1e1e" opacity="0.67"/><rect x="1.8" y="84" width="13.4" height="1" fill="#fff" opacity="0.84"/><rect x="1.8" y="85" width="13.4" height="1" fill="#fff" opacity="0.46"/><rect x="1.8" y="90" width="13.4" height="1" fill="#1e1e1e" opacity="0.64"/><rect x="1.8" y="91" width="13.4" height="1" fill="#fff" opacity="0.73"/><rect x="1.8" y="92" width="13.4" height="1" fill="#fff" opacity="0.40"/><rect x="1.8" y="97" width="13.4" height="1" fill="#1e1e1e" opacity="0.60"/><rect x="1.8" y="98" width="13.4" height="1" fill="#fff" opacity="0.59"/><rect x="1.8" y="103" width="13.4" height="1" fill="#1e1e1e" opacity="0.56"/><rect x="1.8" y="104" width="13.4" height="1" fill="#fff" opacity="0.45"/><rect x="1.8" y="108" width="13.4" height="1" fill="#1e1e1e" opacity="0.52"/><rect x="1.8" y="109" width="13.4" height="1" fill="#fff" opacity="0.32"/><rect x="1.8" y="112" width="13.4" height="1" fill="#1e1e1e" opacity="0.47"/><rect x="1.8" y="113" width="13.4" height="1" fill="#fff" opacity="0.20"/><rect x="1.8" y="116" width="13.4" height="1" fill="#1e1e1e" opacity="0.41"/><rect x="1.8" y="117" width="13.4" height="1" fill="#fff" opacity="0.10"/><rect x="1.8" y="118" width="13.4" height="1" fill="#1e1e1e" opacity="0.35"/><rect x="1.8" y="119" width="13.4" height="1" fill="#fff" opacity="0.04"/><rect x="1.8" y="119" width="13.4" height="1" fill="#1e1e1e" opacity="0.29"/><rect x="1.8" y="120" width="13.4" height="1" fill="#fff" opacity="0.00"/></svg>
<div class="wheelh" style="left:68px;top:488.5px"></div><svg width="122" height="15" style="left:69.7px;top:490.2px"><defs><linearGradient id="wgb" x1="0" y1="0" x2="1" y2="0"><stop offset="0" stop-color="#383838"/><stop offset=".1" stop-color="#5c5c5c"/><stop offset=".28" stop-color="#8c8c8c"/><stop offset=".5" stop-color="#a6a6a6"/><stop offset=".72" stop-color="#8c8c8c"/><stop offset=".9" stop-color="#5c5c5c"/><stop offset="1" stop-color="#383838"/></linearGradient></defs><rect x="0" y="0" width="122" height="15" fill="#2b2b2b"/><rect x="1.5" y="1.8" width="119.5" height="11.4" fill="url(#wgb)"/><rect x="2" y="1.8" width="1" height="11.4" fill="#1e1e1e" opacity="0.33"/><rect x="3" y="1.8" width="1" height="11.4" fill="#fff" opacity="0.02"/><rect x="4" y="1.8" width="1" height="11.4" fill="#1e1e1e" opacity="0.39"/><rect x="5" y="1.8" width="1" height="11.4" fill="#fff" opacity="0.08"/><rect x="7" y="1.8" width="1" height="11.4" fill="#1e1e1e" opacity="0.45"/><rect x="8" y="1.8" width="1" height="11.4" fill="#fff" opacity="0.17"/><rect x="11" y="1.8" width="1" height="11.4" fill="#1e1e1e" opacity="0.50"/><rect x="12" y="1.8" width="1" height="11.4" fill="#fff" opacity="0.28"/><rect x="16" y="1.8" width="1" height="11.4" fill="#1e1e1e" opacity="0.55"/><rect x="17" y="1.8" width="1" height="11.4" fill="#fff" opacity="0.41"/><rect x="22" y="1.8" width="1" height="11.4" fill="#1e1e1e" opacity="0.59"/><rect x="23" y="1.8" width="1" height="11.4" fill="#fff" opacity="0.55"/><rect x="28" y="1.8" width="1" height="11.4" fill="#1e1e1e" opacity="0.63"/><rect x="29" y="1.8" width="1" height="11.4" fill="#fff" opacity="0.69"/><rect x="30" y="1.8" width="1" height="11.4" fill="#fff" opacity="0.38"/><rect x="35" y="1.8" width="1" height="11.4" fill="#1e1e1e" opacity="0.66"/><rect x="36" y="1.8" width="1" height="11.4" fill="#fff" opacity="0.81"/><rect x="37" y="1.8" width="1" height="11.4" fill="#fff" opacity="0.45"/><rect x="43" y="1.8" width="1" height="11.4" fill="#1e1e1e" opacity="0.68"/><rect x="44" y="1.8" width="1" height="11.4" fill="#fff" opacity="0.91"/><rect x="45" y="1.8" width="1" height="11.4" fill="#fff" opacity="0.50"/><rect x="51" y="1.8" width="1" height="11.4" fill="#1e1e1e" opacity="0.69"/><rect x="52" y="1.8" width="1" height="11.4" fill="#fff" opacity="0.97"/><rect x="53" y="1.8" width="1" height="11.4" fill="#fff" opacity="0.54"/><rect x="59" y="1.8" width="1" height="11.4" fill="#1e1e1e" opacity="0.70"/><rect x="60" y="1.8" width="1" height="11.4" fill="#fff" opacity="1.00"/><rect x="61" y="1.8" width="1" height="11.4" fill="#fff" opacity="0.55"/><rect x="67" y="1.8" width="1" height="11.4" fill="#1e1e1e" opacity="0.70"/><rect x="68" y="1.8" width="1" height="11.4" fill="#fff" opacity="0.99"/><rect x="69" y="1.8" width="1" height="11.4" fill="#fff" opacity="0.54"/><rect x="75" y="1.8" width="1" height="11.4" fill="#1e1e1e" opacity="0.69"/><rect x="76" y="1.8" width="1" height="11.4" fill="#fff" opacity="0.93"/><rect x="77" y="1.8" width="1" height="11.4" fill="#fff" opacity="0.51"/><rect x="83" y="1.8" width="1" height="11.4" fill="#1e1e1e" opacity="0.67"/><rect x="84" y="1.8" width="1" height="11.4" fill="#fff" opacity="0.84"/><rect x="85" y="1.8" width="1" height="11.4" fill="#fff" opacity="0.46"/><rect x="90" y="1.8" width="1" height="11.4" fill="#1e1e1e" opacity="0.64"/><rect x="91" y="1.8" width="1" height="11.4" fill="#fff" opacity="0.73"/><rect x="92" y="1.8" width="1" height="11.4" fill="#fff" opacity="0.40"/><rect x="97" y="1.8" width="1" height="11.4" fill="#1e1e1e" opacity="0.60"/><rect x="98" y="1.8" width="1" height="11.4" fill="#fff" opacity="0.59"/><rect x="103" y="1.8" width="1" height="11.4" fill="#1e1e1e" opacity="0.56"/><rect x="104" y="1.8" width="1" height="11.4" fill="#fff" opacity="0.45"/><rect x="108" y="1.8" width="1" height="11.4" fill="#1e1e1e" opacity="0.52"/><rect x="109" y="1.8" width="1" height="11.4" fill="#fff" opacity="0.32"/><rect x="113" y="1.8" width="1" height="11.4" fill="#1e1e1e" opacity="0.47"/><rect x="114" y="1.8" width="1" height="11.4" fill="#fff" opacity="0.20"/><rect x="116" y="1.8" width="1" height="11.4" fill="#1e1e1e" opacity="0.41"/><rect x="117" y="1.8" width="1" height="11.4" fill="#fff" opacity="0.10"/><rect x="118" y="1.8" width="1" height="11.4" fill="#1e1e1e" opacity="0.35"/><rect x="119" y="1.8" width="1" height="11.4" fill="#fff" opacity="0.04"/><rect x="120" y="1.8" width="1" height="11.4" fill="#1e1e1e" opacity="0.29"/><rect x="121" y="1.8" width="1" height="11.4" fill="#fff" opacity="0.00"/></svg>
<div class="lbl" style="left:1.8px;top:492px">Rotx</div><div class="lbl" style="left:33.8px;top:492px">Roty</div><div class="lbl" style="left:474.8px;top:492px">Dolly</div>
<svg width="506" height="512" style="left:0;top:0"><g transform="translate(-448,-60)"><defs><radialGradient id="sg" cx=".4" cy=".35" r=".7"><stop offset="0" stop-color="#e6e6e6"/><stop offset=".6" stop-color="#b0b0b0"/><stop offset="1" stop-color="#7c7c7c"/></radialGradient><pattern id="dith" width="2" height="2" patternUnits="userSpaceOnUse"><rect width="2" height="2" fill="#fff"/><rect x="0" y="0" width="1" height="1" fill="#f0f0f0"/><rect x="1" y="1" width="1" height="1" fill="#f0f0f0"/></pattern><linearGradient id="rg" x1="0" y1="0" x2="1" y2="1"><stop offset="0" stop-color="#f04040"/><stop offset="1" stop-color="#9c0c0c"/></linearGradient></defs><circle cx="931.0" cy="104.6" r="6.8" fill="url(#sg)" stroke="#6a6a6a" stroke-width=".8"/><path d="M935.2,107.6 L929.0,104.2 L929.0,113.3 L935.2,117.2 Z" fill="#c9c9c9" stroke="#4a4a4a" stroke-width=".8" stroke-linejoin="round"/><path d="M935.2,107.6 L941.4,104.6 L941.4,112.7 L935.2,117.2 Z" fill="#929292" stroke="#4a4a4a" stroke-width=".8" stroke-linejoin="round"/><path d="M935.2,107.6 L929.0,104.2 L935.2,101.9 L941.4,104.6 Z" fill="#e4e4e4" stroke="#4a4a4a" stroke-width=".8" stroke-linejoin="round"/><path d="M937.6,107.4 L937.6,117.6 L940.2,115.3 L942.6,120.2 L944.4,119.3 L942,114.5 L945.4,114.2 Z" fill="#000"/><rect x="919.5" y="124.5" width="30" height="29" fill="url(#dith)"/><path d="M919.5,153.5 L919.5,124.5 L949.5,124.5" fill="none" stroke="#a0a0a0" stroke-width="1"/><path d="M949.5,125 L949.5,153.5 L920,153.5" fill="none" stroke="#fff" stroke-width="1"/><circle cx="933.2" cy="136.2" r="7.2" fill="url(#sg)" stroke="#6a6a6a" stroke-width=".8"/><path d="M934.6,138.4 L929.6,135.6 L929.6,142.9 L934.6,146.1 Z" fill="#c9c9c9" stroke="#4a4a4a" stroke-width=".8" stroke-linejoin="round"/><path d="M934.6,138.4 L939.6,136.0 L939.6,142.5 L934.6,146.1 Z" fill="#929292" stroke="#4a4a4a" stroke-width=".8" stroke-linejoin="round"/><path d="M934.6,138.4 L929.6,135.6 L934.6,133.9 L939.6,136.0 Z" fill="#e4e4e4" stroke="#4a4a4a" stroke-width=".8" stroke-linejoin="round"/><path d="M934.7,128.8 L937.6,132.9 L935.8,132.7 L935.8,139.3 L942.6,139.3 L942.4,137.5 L946.6,140.4 L942.4,143.400 L942.6,141.500 L935.8,141.500 L935.8,147.300 L937.6,147.100 L934.7,151.200 L931.8,147.100 L933.6,147.300 L933.6,141.500 L927.8,141.500 L928,143.400 L923.8,140.400 L928,137.500 L927.8,139.300 L933.6,139.300 L933.6,132.700 L931.8,132.900 Z" fill="url(#rg)" stroke="#8a1010" stroke-width=".6" stroke-linejoin="round"/><path d="M923.5,165.2 L929.5,158.5 L936.2,162.2 L932.5,169.0 Z" fill="#8a8a8a" stroke="#505050" stroke-width=".8" stroke-linejoin="round"/><path d="M923.5,165.2 L932.5,169.0 L932.5,175.0 L923.5,169.7 Z" fill="#c2c2c2" stroke="#505050" stroke-width=".8" stroke-linejoin="round"/><path d="M932.5,169.0 L936.2,162.2 L940.7,166.0 L940.7,170.5 L932.5,175.0 Z" fill="#dcdcdc" stroke="#505050" stroke-width=".8" stroke-linejoin="round"/><path d="M935.7,168.8 L937.9,167.8 L937.9,171.8 L935.7,173.0 Z" fill="#7c7c7c"/><path d="M936.4,171.8 L944.4,171.6 L942.2,173.8 L945.8,177.6 L942.8,180.2 L939.2,176.6 L936.6,178.8 Z" fill="#cc0a0a" stroke="#4a0000" stroke-width=".8" stroke-linejoin="round"/><path d="M925.2,193.4 L931.2,186.7 L937.9,190.4 L934.2,197.2 Z" fill="#8a8a8a" stroke="#505050" stroke-width=".8" stroke-linejoin="round"/><path d="M925.2,193.4 L934.2,197.2 L934.2,203.2 L925.2,197.9 Z" fill="#c2c2c2" stroke="#505050" stroke-width=".8" stroke-linejoin="round"/><path d="M934.2,197.2 L937.9,190.4 L942.4,194.2 L942.4,198.7 L934.2,203.2 Z" fill="#dcdcdc" stroke="#505050" stroke-width=".8" stroke-linejoin="round"/><path d="M937.4,197.0 L939.6,196.0 L939.6,200.0 L937.4,201.2 Z" fill="#7c7c7c"/><path d="M932.2,202.2 L936.2,202.2 L936.2,205 L939.6,205 L934.2,210.8 L928.6,205 L932.2,205 Z" fill="#cc0a0a" stroke="#4a0000" stroke-width=".8" stroke-linejoin="round"/><rect x="922.8" y="218.2" width="22.8" height="22.2" fill="none" stroke="#fff" stroke-width="2.2"/><rect x="922.8" y="218.2" width="22.8" height="22.2" fill="none" stroke="#4a4a4a" stroke-width="1.3" stroke-dasharray="2.6 2.5"/><circle cx="931.2" cy="225.2" r="6.0" fill="url(#sg)" stroke="#6a6a6a" stroke-width=".8"/><path d="M936.2,229.8 L930.5,226.6 L930.5,235.0 L936.2,238.6 Z" fill="#c9c9c9" stroke="#4a4a4a" stroke-width=".8" stroke-linejoin="round"/><path d="M936.2,229.8 L941.9,227.0 L941.9,234.5 L936.2,238.6 Z" fill="#929292" stroke="#4a4a4a" stroke-width=".8" stroke-linejoin="round"/><path d="M936.2,229.8 L930.5,226.6 L936.2,224.6 L941.9,227.0 Z" fill="#e4e4e4" stroke="#4a4a4a" stroke-width=".8" stroke-linejoin="round"/><circle cx="933.5" cy="258.5" r="8" fill="none" stroke="#000" stroke-width="1.3"/><path d="M933.500,250 L933.500,256 M933.500,261 L933.500,267 M925,258.500 L931,258.500 M936,258.500 L942,258.500" stroke="#000" stroke-width="1.2" fill="none"/><rect x="932" y="248.500" width="3" height="3" fill="#000"/><rect x="932" y="265.500" width="3" height="3" fill="#000"/><rect x="923.500" y="257" width="3" height="3" fill="#000"/><rect x="940.500" y="257" width="3" height="3" fill="#000"/><defs><linearGradient id="pc1" x1="0" y1="0" x2="0" y2="1"><stop offset="0" stop-color="#a4a4a4"/><stop offset="1" stop-color="#7e7e7e"/></linearGradient><linearGradient id="pc2" x1="0" y1="0" x2="0" y2="1"><stop offset="0" stop-color="#787878"/><stop offset="1" stop-color="#5c5c5c"/></linearGradient></defs><path d="M925.1,279.6 L934.7,283.9 L934.7,299.6 L925.6,289.4 Z" fill="url(#pc1)" stroke="#6a6a6a" stroke-width=".6" stroke-linejoin="round"/><path d="M934.7,283.9 L944,279.6 L943.5,289.4 L934.7,299.6 Z" fill="url(#pc2)" stroke="#5a5a5a" stroke-width=".6" stroke-linejoin="round"/><path d="M925.1,279.6 L934.2,277.3 L944,279.6 L934.7,283.9 Z" fill="#bcbcbc" stroke="#8a8a8a" stroke-width=".6" stroke-linejoin="round"/></g></svg></div>
<svg width="969" height="616" style="z-index:9"><path d="M693.5,1.5 L693.5,17.6 L697.3,14 L700.3,20.3 L702.7,19.2 L699.8,13 L704.8,13 Z" fill="#fff" stroke="#000" stroke-width="1" stroke-linejoin="miter"/></svg>
<svg width="969" height="616" style="z-index:4"><rect x="901.500" y="-2" width="70" height="47" fill="#d3d3d3" stroke="#9f9f9f" stroke-width="1"/><rect x="919.1" y="0" width="32.3" height="36.5" fill="#b1c6c5"/><rect x="953.8" y="0" width="16" height="36.5" fill="#b1c6c5"/><rect x="922.2" y="0.0" width="12.2" height="4.9" fill="#3d6c9c"/><rect x="936.2" y="0.0" width="13.2" height="3.7" fill="#3f7358"/><rect x="941.3" y="9.3" width="4.8" height="3.7" fill="#3d6c9c"/><rect x="936.4" y="19.0" width="13.0" height="5.0" fill="#3d6c9c"/><rect x="937.2" y="29.2" width="11.8" height="4.1" fill="#3f7358"/><rect x="937.2" y="39.0" width="11.4" height="5.2" fill="#a66206"/><rect x="960.3" y="10.1" width="8.7" height="3.3" fill="#3f7358"/><rect x="956.3" y="17.0" width="12.7" height="6.5" fill="#3f7358"/><rect x="956.3" y="29.2" width="12.7" height="3.7" fill="#a66206"/><path d="M928.3,4.9 L929.2,6.2 L939,7.8 L942.5,9.3 M941,0 Q944,8 942.5,14 Q940,24 939.5,29 M939.5,9 Q935.8,20 935.4,36.6 L943,38 L969,35.8 M952.6,0 Q956,14 960,26 Q963,33 969,36.4" fill="none" stroke="#1d4f86" stroke-width="1.1"/><path d="M943.7,24 L943.7,29.5 M962.4,23.5 Q963.6,26 963.8,29.2" fill="none" stroke="#8a4d1a" stroke-width="1"/><path d="M969,5 Q966,8 965,10.5 M967.5,13.4 L964.5,17.4" fill="none" stroke="#2a7474" stroke-width="1"/><rect x="934.6" y="35.6" width="1.8" height="1.8" fill="#0000d0"/><rect x="938" y="0" width="2" height="45.8" fill="#ffff00"/></svg>
</body></html>
